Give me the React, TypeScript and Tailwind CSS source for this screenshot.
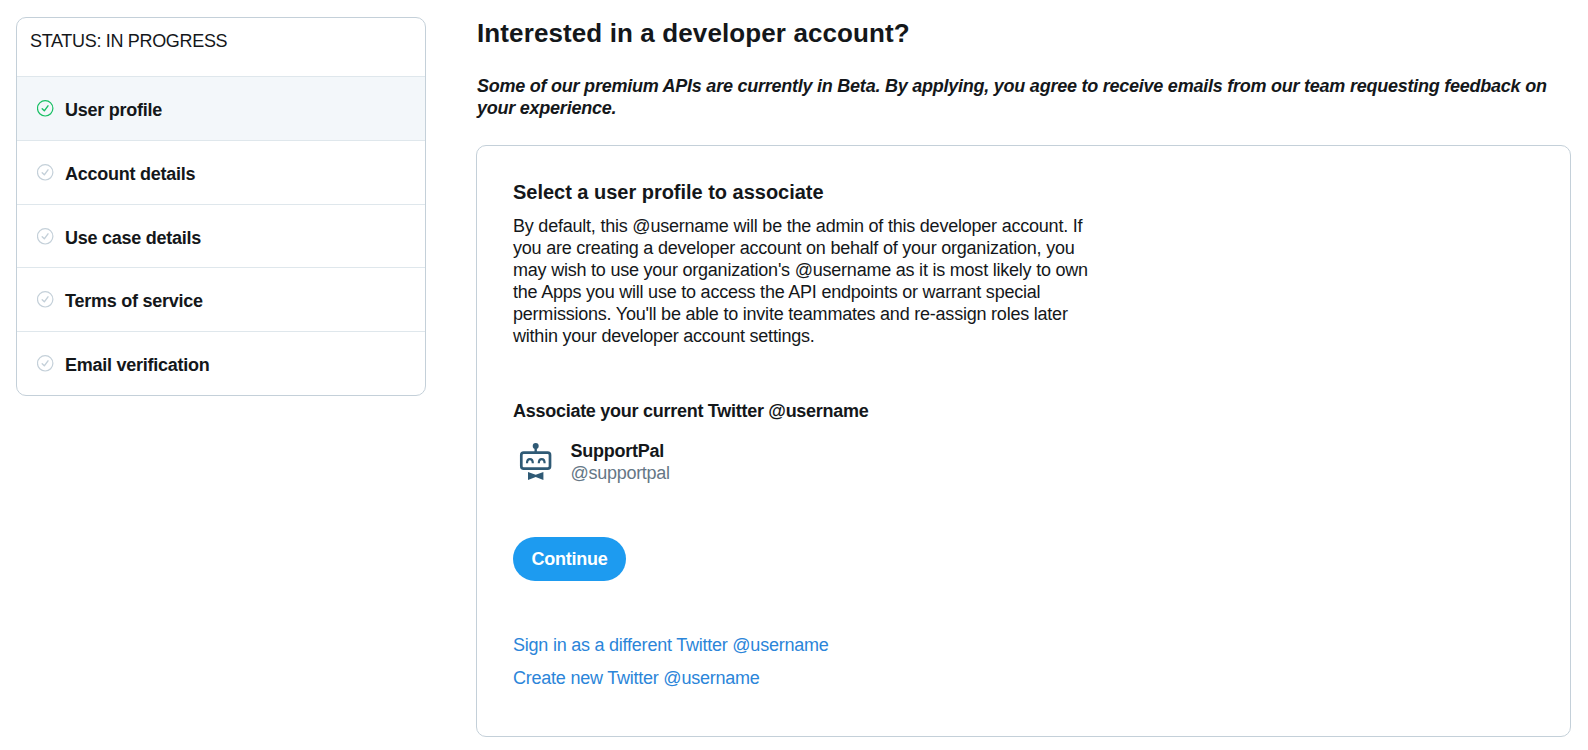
import React from 'react';
import clsx from 'clsx';

interface Step {
  label: string;
  active?: boolean;
}

const steps: Step[] = [
  { label: 'User profile', active: true },
  { label: 'Account details' },
  { label: 'Use case details' },
  { label: 'Terms of service' },
  { label: 'Email verification' },
];

const StepCheck: React.FC<{ active?: boolean }> = ({ active }) => (
  <svg
    viewBox="0 0 17 17"
    fill="none"
    stroke="currentColor"
    strokeLinecap="round"
    strokeLinejoin="round"
    className={clsx('h-[17px] w-[17px] shrink-0', active ? 'text-[#17bf63]' : 'text-[#c4d0d9]')}
  >
    <circle cx="8.2" cy="8.3" r="7.7" strokeWidth="1.2" />
    <path d="M5.2 8.8l2.1 2 3.7-5" strokeWidth="1.4" />
  </svg>
);

const RobotAvatar = () => (
  <svg viewBox="0 0 48 48" className="h-12 w-12 shrink-0 text-[#2f5a75]" fill="none" stroke="currentColor">
    <circle cx="22.7" cy="7.1" r="3" fill="currentColor" stroke="none" />
    <path d="M22.7 8v5" strokeWidth="2.4" />
    <rect x="8.3" y="13.7" width="28.7" height="16" rx="2.4" strokeWidth="2.7" />
    <path d="M14 24.2c0-5.4 5.8-5.4 5.8 0M25.8 24.2c0-5.4 5.8-5.4 5.8 0" strokeWidth="2.2" />
    <path d="M15 32.9l7.7 2.8 7.7-2.8v8l-7.7-2.8-7.7 2.8z" fill="currentColor" stroke="none" />
  </svg>
);

export default function App() {
  return (
    <div className="flex h-[750px] items-start gap-[50px] bg-white pt-[17px] pl-4 font-['Liberation_Sans',Arial,sans-serif] text-lg leading-[22px] tracking-[-0.25px] text-[#14171a]">
      {/* Progress */}
      <aside className="w-[410px] shrink-0 overflow-hidden rounded-[10px] border border-[#c4d0d9]">
        <div className="h-[58px] pt-3 pl-[13px] tracking-[-0.32px]">STATUS: IN PROGRESS</div>
        <ul>
          {steps.map((step) => (
            <li
              key={step.label}
              className={clsx(
                'flex h-[63.8px] items-start border-t border-[#dfe7ec] pt-[22px] pl-5',
                step.active && 'bg-[#f3f7fa]'
              )}
            >
              <div className="pt-px">
                <StepCheck active={step.active} />
              </div>
              <span className="ml-[11px] font-bold">{step.label}</span>
            </li>
          ))}
        </ul>
      </aside>

      <main className="w-[1095px] shrink-0">
        <h1 className="pl-px text-[26px] leading-8 font-bold tracking-[0.11px]">
          Interested in a developer account?
        </h1>
        <p className="mt-[26px] pl-px font-bold tracking-[-0.24px] italic">
          Some of our premium APIs are currently in Beta. By applying, you agree to receive emails from our team
          requesting feedback on
          <br />
          your experience.
        </p>

        <section className="mt-[26px] h-[592px] rounded-[10px] border border-[#c4d0d9] px-9 pt-[34px]">
          <h2 className="text-xl leading-6 font-bold tracking-[-0.02px]">Select a user profile to associate</h2>
          <p className="mt-[11px] w-[590px] tracking-[-0.22px]">
            By default, this @username will be the admin of this developer account. If
            <br />
            you are creating a developer account on behalf of your organization, you
            <br />
            may wish to use your organization's @username as it is most likely to own
            <br />
            the Apps you will use to access the API endpoints or warrant special
            <br />
            permissions. You'll be able to invite teammates and re-assign roles later
            <br />
            within your developer account settings.
          </p>

          <h3 className="mt-[53px] font-bold tracking-[-0.27px]">Associate your current Twitter @username</h3>
          <div className="mt-[17px] flex items-center">
            <RobotAvatar />
            <div className="ml-[9.5px] pb-0.5">
              <div className="font-bold">SupportPal</div>
              <div className="tracking-[-0.28px] text-[#657786]">@supportpal</div>
            </div>
          </div>

          <button className="mt-[50px] block h-11 w-[113px] rounded-full bg-[#1d9bf0] font-bold tracking-[-0.25px] text-white">
            Continue
          </button>

          <div className="mt-[53px] flex flex-col items-start gap-[11px] tracking-[-0.23px] text-[#2b85d9]">
            <a href="#">Sign in as a different Twitter @username</a>
            <a href="#">Create new Twitter @username</a>
          </div>
        </section>
      </main>
    </div>
  );
}
